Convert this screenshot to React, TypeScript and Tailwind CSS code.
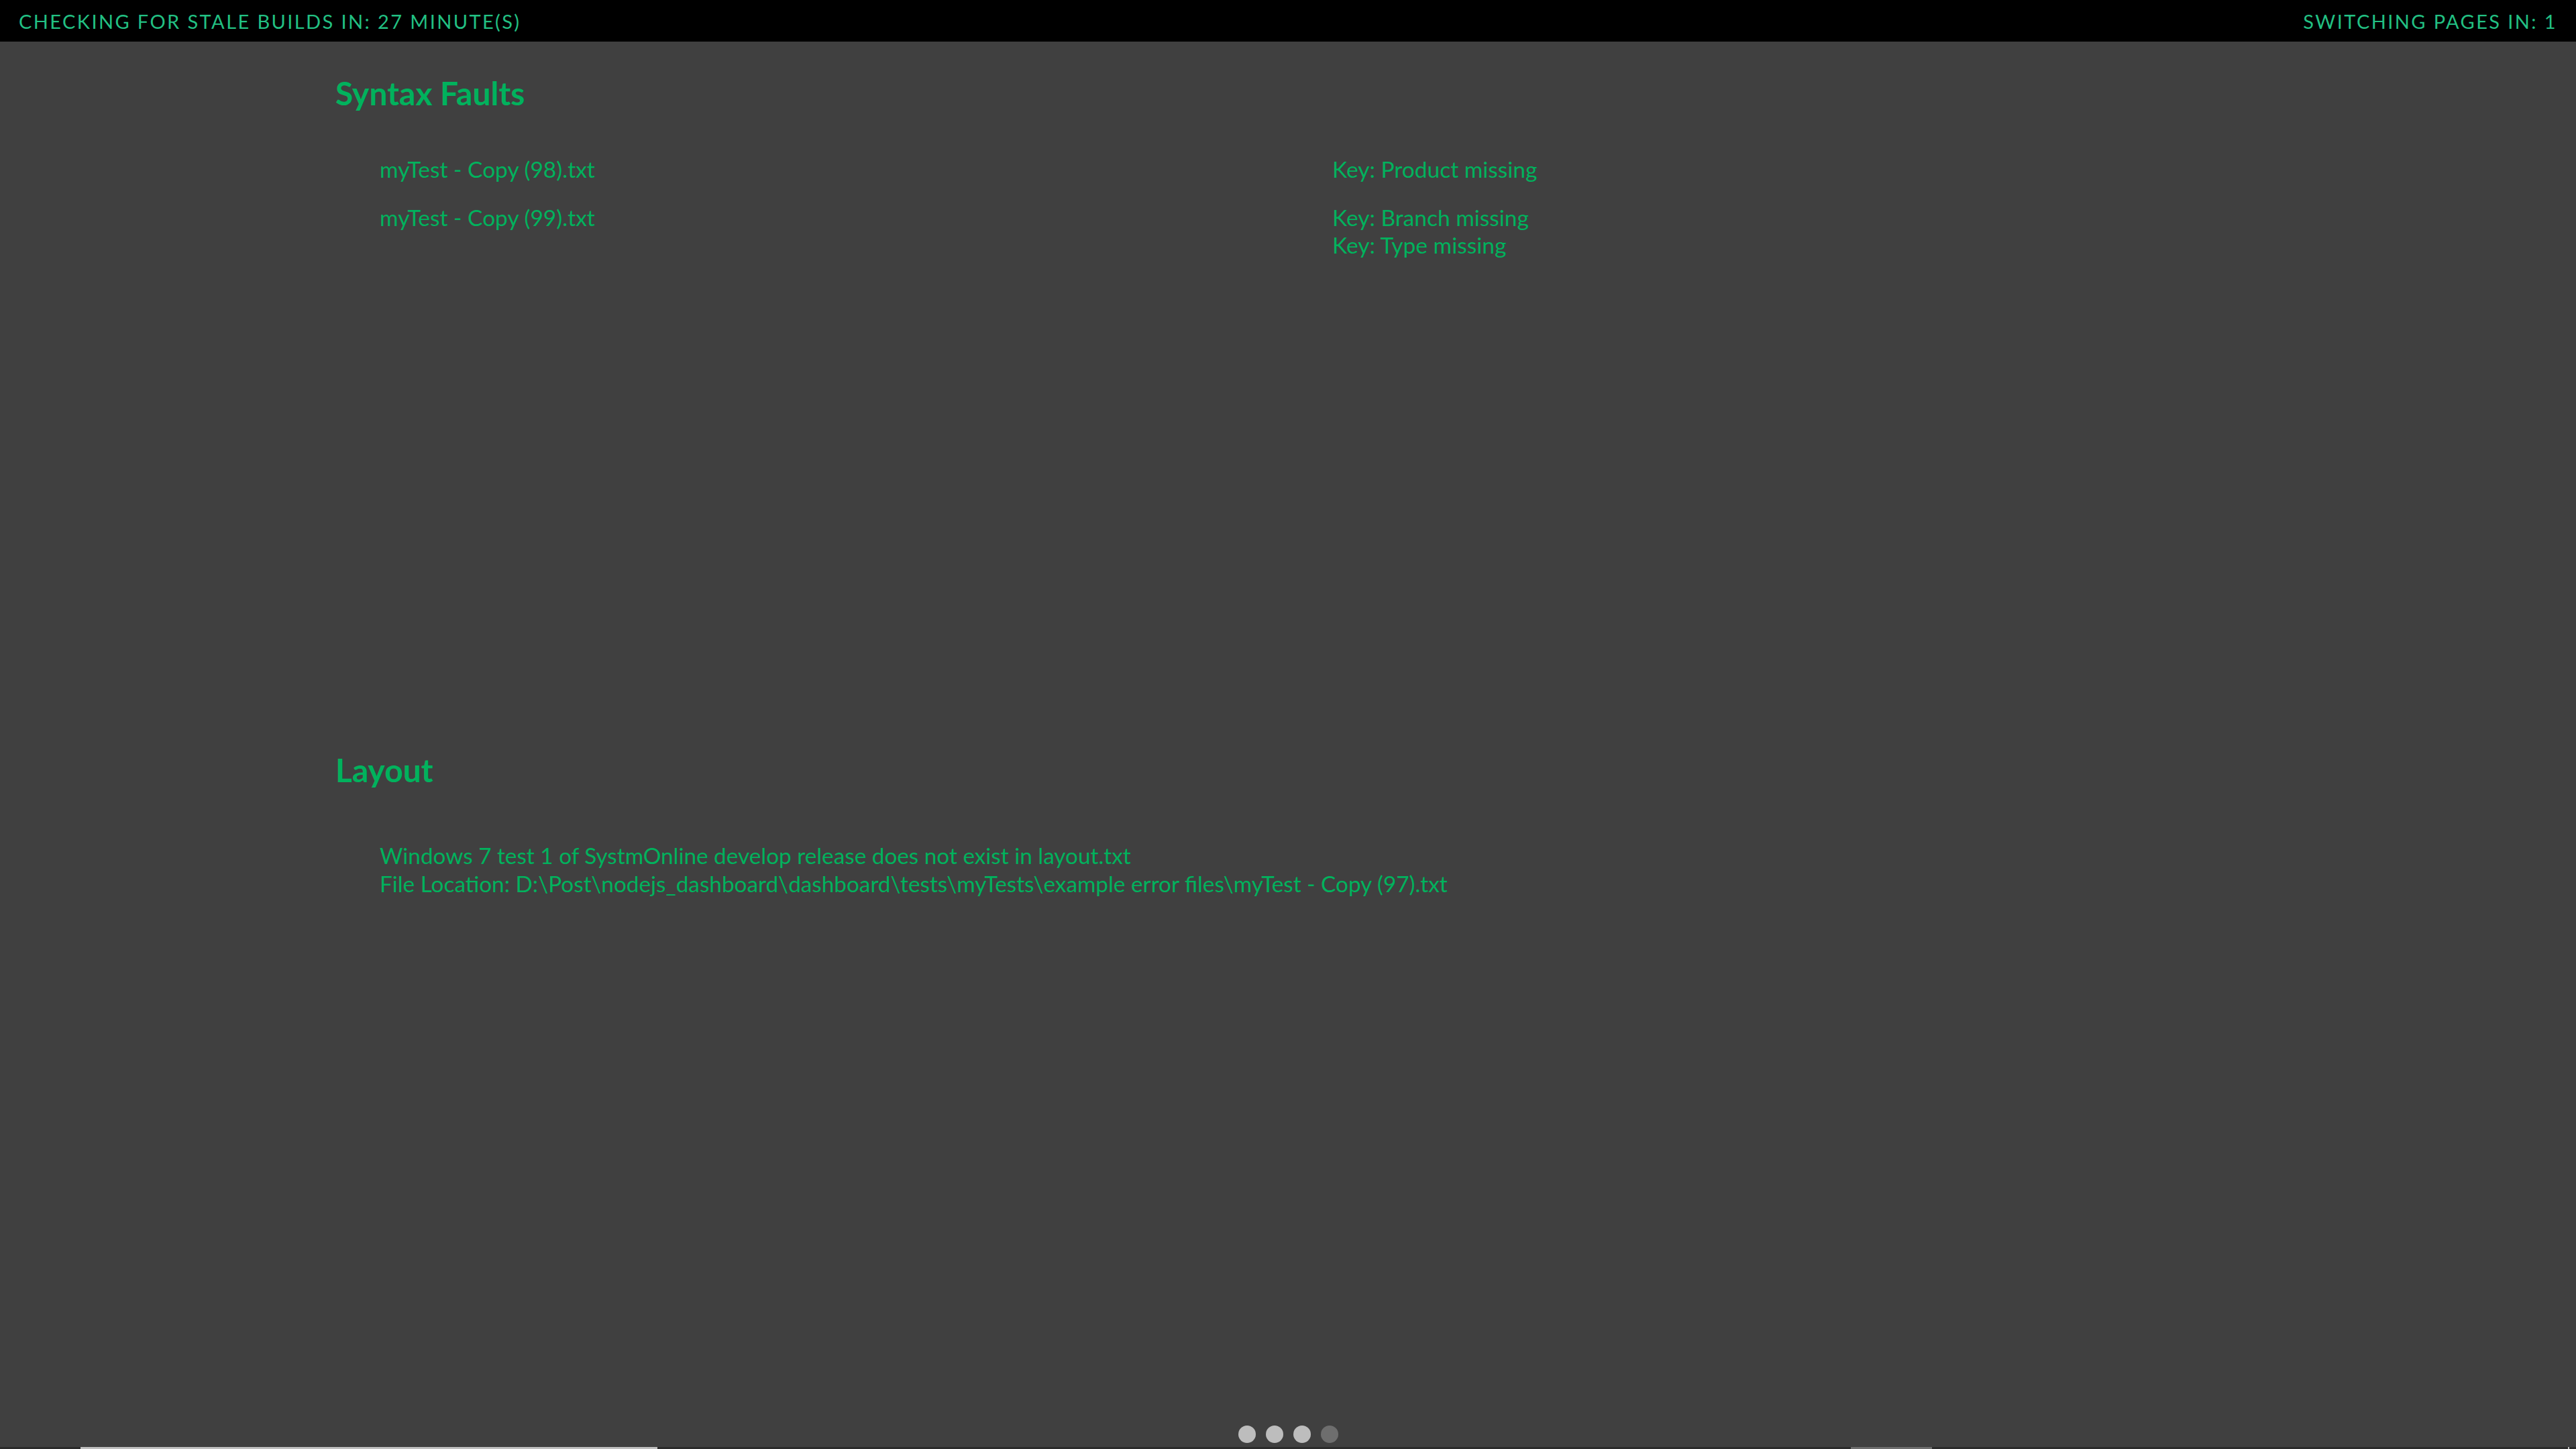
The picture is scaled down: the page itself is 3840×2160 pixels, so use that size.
export default function App() {
  const faults = [
    { file: 'myTest - Copy (98).txt', keys: ['Key: Product missing'] },
    { file: 'myTest - Copy (99).txt', keys: ['Key: Branch missing', 'Key: Type missing'] },
  ]

  return (
    <div className="h-[2160px] w-full bg-[#404040] flex flex-col overflow-hidden font-['Lato','Open_Sans',sans-serif]">
      <header className="h-[62px] shrink-0 bg-black flex items-center justify-between px-[28px] text-[29px] leading-[35px] tracking-[2.4px] uppercase text-[#22c083]">
        <span>Checking for stale builds in: 27 minute(s)</span>
        <span>Switching pages in: 1</span>
      </header>

      <main className="flex-1 pl-[500px] pt-[51px] text-[#00b25d]">
        <section className="h-[1009px]">
          <h2 className="text-[48px] leading-[52px] font-bold">Syntax Faults</h2>
          <div className="mt-[52px] text-[33.5px] leading-[41.5px]">
            {faults.map((row) => (
              <div key={row.file} className="grid grid-cols-[1420px_1fr] py-[15px] pl-[66px]">
                <div>{row.file}</div>
                <div>
                  {row.keys.map((k) => (
                    <div key={k}>{k}</div>
                  ))}
                </div>
              </div>
            ))}
          </div>
        </section>

        <section>
          <h2 className="text-[48px] leading-[52px] font-bold">Layout</h2>
          <div className="mt-[81px] pl-[66px] text-[33.3px] leading-[41.5px]">
            <div>Windows 7 test 1 of SystmOnline develop release does not exist in layout.txt</div>
            <div>File Location: D:\Post\nodejs_dashboard\dashboard\tests\myTests\example error files\myTest - Copy (97).txt</div>
          </div>
        </section>
      </main>

      <div className="flex justify-center gap-[15px] pb-[6px]">
        <span className="w-[26px] h-[26px] rounded-full bg-[#bdbdbd]" />
        <span className="w-[26px] h-[26px] rounded-full bg-[#bdbdbd]" />
        <span className="w-[26px] h-[26px] rounded-full bg-[#bdbdbd]" />
        <span className="w-[26px] h-[26px] rounded-full bg-[#6e6e6e]" />
      </div>

      <div className="h-[3px] shrink-0 bg-[#2b2b2b] flex">
        <div className="ml-[120px] w-[860px] bg-[#c0c0c0]" />
        <div className="ml-[1779px] w-[121px] bg-[#6e6e6e]" />
        <div className="ml-[948px] w-[2px] bg-[#c0c0c0]" />
      </div>
    </div>
  )
}
